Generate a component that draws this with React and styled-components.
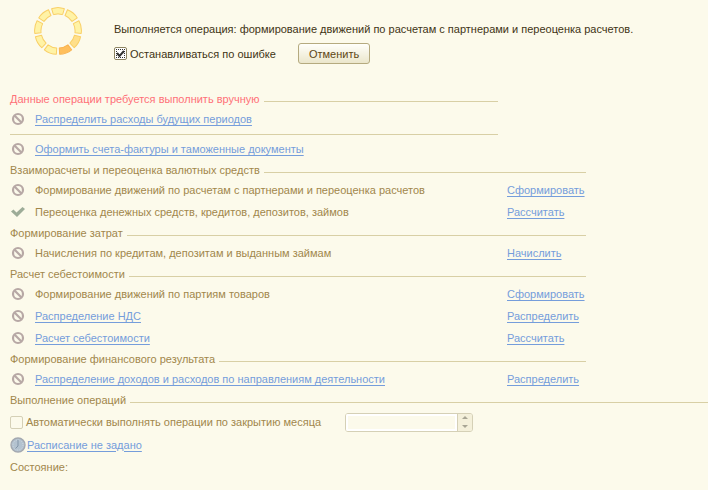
import React, { useState } from "react";
import styled, { createGlobalStyle } from "styled-components";

const manual = [
  { id: "expenses", name: "Распределить расходы будущих периодов", link: true },
];

const invoices = [
  { id: "invoices", name: "Оформить счета-фактуры и таможенные документы", link: true },
];

const groups = [
  {
    title: "Взаиморасчеты и переоценка валютных средств",
    operations: [
      { id: "partners", name: "Формирование движений по расчетам с партнерами и переоценка расчетов", action: "Сформировать" },
      { id: "cash", name: "Переоценка денежных средств, кредитов, депозитов, займов", action: "Рассчитать", done: true },
    ],
  },
  {
    title: "Формирование затрат",
    operations: [
      { id: "credits", name: "Начисления по кредитам, депозитам и выданным займам", action: "Начислить" },
    ],
  },
  {
    title: "Расчет себестоимости",
    operations: [
      { id: "batches", name: "Формирование движений по партиям товаров", action: "Сформировать" },
      { id: "vat", name: "Распределение НДС", action: "Распределить", link: true },
      { id: "cost", name: "Расчет себестоимости", action: "Рассчитать", link: true },
    ],
  },
  {
    title: "Формирование финансового результата",
    operations: [
      { id: "income", name: "Распределение доходов и расходов по направлениям деятельности", action: "Распределить", link: true },
    ],
  },
];

export default function App() {
  const [stopOnError, setStopOnError] = useState(true);
  const [auto, setAuto] = useState(false);
  const [delay, setDelay] = useState("");

  return (
    <>
      <GlobalStyle />
      <Page>
        <Header>
          <Spinner />
          <Progress>
            <p>
              Выполняется операция: формирование движений по расчетам с
              партнерами и переоценка расчетов.
            </p>
            <Controls>
              <CheckLabel $dark>
                <Checkbox
                  type="checkbox"
                  $dark
                  checked={stopOnError}
                  onChange={(e) => setStopOnError(e.target.checked)}
                />
                Останавливаться по ошибке
              </CheckLabel>
              <CancelButton type="button">Отменить</CancelButton>
            </Controls>
          </Progress>
        </Header>

        <Group $width="488px">
          <GroupTitle $alert>Данные операции требуется выполнить вручную</GroupTitle>
          <Operations items={manual} />
          <Separator />
          <Operations items={invoices} />
        </Group>

        {groups.map((group) => (
          <Group key={group.title} $width="576px">
            <GroupTitle>{group.title}</GroupTitle>
            <Operations items={group.operations} />
          </Group>
        ))}

        <Group>
          <GroupTitle>Выполнение операций</GroupTitle>
          <Schedule>
            <ScheduleRow>
              <CheckLabel>
                <Checkbox
                  type="checkbox"
                  checked={auto}
                  onChange={(e) => setAuto(e.target.checked)}
                />
                Автоматически выполнять операции по закрытию месяца
              </CheckLabel>
              <NumberField>
                <input
                  type="text"
                  aria-label="Задержка"
                  value={delay}
                  onChange={(e) => setDelay(e.target.value)}
                />
                <Steps>
                  <button type="button" aria-label="Больше" onClick={() => setDelay(String(Number(delay) + 1))}>
                    <svg width="6" height="3" viewBox="0 0 6 3"><path d="M0 3L3 0L6 3Z" fill="#a8a594" /></svg>
                  </button>
                  <button type="button" aria-label="Меньше" onClick={() => setDelay(String(Number(delay) - 1))}>
                    <svg width="6" height="3" viewBox="0 0 6 3"><path d="M0 0L3 3L6 0Z" fill="#a8a594" /></svg>
                  </button>
                </Steps>
              </NumberField>
            </ScheduleRow>
            <ClockRow>
              <ClockIcon />
              <Link href="#schedule">Расписание не задано</Link>
            </ClockRow>
            <Status>Состояние:</Status>
          </Schedule>
        </Group>
      </Page>
    </>
  );
}

function Operations({ items }) {
  return (
    <List>
      {items.map((item) => (
        <Operation key={item.id}>
          {item.done ? <DoneIcon /> : <BlockedIcon />}
          <Name>
            {item.link ? <Link href={`#${item.id}`}>{item.name}</Link> : item.name}
          </Name>
          {item.action && <Link href={`#run-${item.id}`}>{item.action}</Link>}
        </Operation>
      ))}
    </List>
  );
}

function Spinner() {
  const fills = ["#fff3a6", "#fff3a6", "#fff3a6", "#ffdf8a", "#ffbf5c", "#fff3a6", "#fff3a6", "#fff3a6", "#fff3a6"];
  return (
    <svg width="48" height="48" viewBox="-24 -24 48 48" aria-hidden="true">
      {fills.map((fill, i) => (
        <path
          key={i}
          d="M-6.4 -22.4Q0 -24.6 6.4 -22.4L4.6 -16.4Q0 -17.8 -4.6 -16.4Z"
          transform={`rotate(${i * 40})`}
          fill={fill}
          stroke={i === 4 ? "#f8b452" : "#f9cf66"}
          strokeLinejoin="round"
        />
      ))}
    </svg>
  );
}

function BlockedIcon() {
  return (
    <svg width="16" height="14" viewBox="0 0 16 14" aria-hidden="true">
      <circle cx="8" cy="7" r="5" fill="none" stroke="#b7a8a5" strokeWidth="2.2" />
      <path d="M4.500 3.500L11.500 10.500" stroke="#b7a8a5" strokeWidth="2.2" />
    </svg>
  );
}

function DoneIcon() {
  return (
    <svg width="16" height="14" viewBox="0 0 16 14" aria-hidden="true">
      <path d="M1 6.500L3.500 4.500L6.500 7.500L12.500 2L15 4L7 12Z" fill="#9dac98" />
    </svg>
  );
}

function ClockIcon() {
  return (
    <svg width="16" height="16" viewBox="0 0 16 16" aria-hidden="true">
      <circle cx="8" cy="8" r="7" fill="#b3c2cf" stroke="#a3a8b0" strokeWidth="1.4" />
      <circle cx="8" cy="8" r="5" fill="none" stroke="#d3dae0" strokeDasharray="1 1.6" />
      <path d="M8 3V9L5.500 11.500" fill="none" stroke="#8295a8" />
    </svg>
  );
}

const GlobalStyle = createGlobalStyle`
  * {
    box-sizing: border-box;
  }

  body {
    margin: 0;
    background-color: #fcfaeb;
    color: #a1874b;
    font-family: "Liberation Sans", Arial, sans-serif;
    font-size: 11px;
    line-height: 16px;
  }

  p {
    margin: 0;
  }

  button,
  input {
    font: inherit;
  }

  svg {
    flex: none;
  }
`;

const Page = styled.main`
  padding: 7px 0 12px 10px;
`;

const Header = styled.header`
  display: flex;
  gap: 32px;
  padding-left: 24px;
  margin-bottom: 25px;
  color: #3f3415;
`;

const Progress = styled.div`
  display: flex;
  flex-direction: column;
  gap: 6px;
  padding-top: 14px;
`;

const Controls = styled.div`
  display: flex;
  align-items: center;
  gap: 22px;
`;

const CheckLabel = styled.label`
  display: flex;
  align-items: center;
  gap: 3px;
  color: ${(props) => (props.$dark ? "#3f3415" : "#a1874b")};
`;

const Checkbox = styled.input`
  appearance: none;
  flex: none;
  width: 13px;
  height: 13px;
  margin: 0;
  border: 1px solid ${(props) => (props.$dark ? "#8d8461" : "#d5d0b6")};
  border-radius: 2px;
  background-color: ${(props) => (props.$dark ? "white" : "#fcfaeb")};

  &:checked {
    outline: 1px dotted #333333;
    outline-offset: -3px;
    background-image: url("data:image/svg+xml,%3Csvg xmlns='http://www.w3.org/2000/svg' viewBox='0 0 11 11'%3E%3Cpath d='M2 5L4.500 8L9 3' fill='none' stroke='%23333' stroke-width='2'/%3E%3C/svg%3E");
  }
`;

const CancelButton = styled.button`
  min-width: 72px;
  height: 21px;
  padding: 0 10px;
  border: 1px solid #b5aa7f;
  border-radius: 3px;
  background: linear-gradient(#fffffb, #ebe6cb);
  color: #5e4613;
  line-height: 16px;
`;

const Group = styled.section`
  max-width: ${(props) => props.$width || "none"};
`;

const GroupTitle = styled.h2`
  display: flex;
  gap: 4px;
  height: 19px;
  margin: 0;
  font-size: 11px;
  font-weight: 400;
  line-height: 20px;
  white-space: nowrap;
  color: ${(props) => (props.$alert ? "#ff7078" : "#a1874b")};

  &::after {
    content: "";
    flex: 1;
    height: 1px;
    margin-top: 12px;
    background-color: #d8cfa5;
  }
`;

const Separator = styled.hr`
  height: 1px;
  margin: 4px 0 3px;
  border: none;
  background-color: #d8cfa5;
`;

const List = styled.ul`
  margin: 0;
  padding: 0;
  list-style: none;
`;

const Operation = styled.li`
  display: grid;
  grid-template-columns: 16px 1fr 79px;
  align-items: center;
  column-gap: 9px;
  height: 22px;
  white-space: nowrap;
`;

const Name = styled.span`
  min-width: 0;
`;

const Link = styled.a`
  justify-self: start;
  color: #759ddb;
  text-decoration: underline;
  text-underline-offset: 2px;
`;

const Schedule = styled.div`
  padding-top: 2px;
`;

const ScheduleRow = styled.div`
  display: flex;
  align-items: center;
  gap: 24px;
  height: 22px;
`;

const NumberField = styled.div`
  display: flex;
  width: 128px;
  height: 19px;
  border: 1px solid #d5d0b6;
  border-radius: 3px;
  overflow: hidden;

  input {
    flex: 1;
    min-width: 0;
    padding: 0 2px;
    border: 2px solid white;
    background-color: #fcfaeb;
    color: #a1874b;
  }
`;

const Steps = styled.div`
  display: flex;
  flex-direction: column;
  width: 15px;
  border-left: 1px solid #d5d0b6;
  background-color: #f4f0da;

  button {
    display: flex;
    flex: 1;
    align-items: center;
    justify-content: center;
    padding: 0;
    border: none;
    background: none;
  }
`;

const ClockRow = styled.div`
  display: flex;
  align-items: center;
  gap: 1px;
  height: 23px;
`;

const Status = styled.p`
  line-height: 22px;
`;
